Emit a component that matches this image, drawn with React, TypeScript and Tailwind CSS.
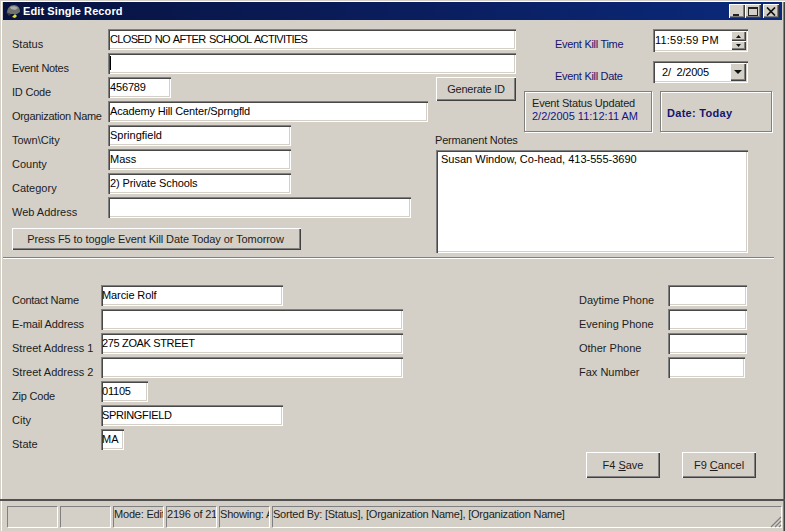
import React from "react";

const SUNK = "bg-white shadow-[inset_1px_1px_0_#808080,inset_2px_2px_0_#484848,inset_-1px_-1px_0_#ffffff,inset_-2px_-2px_0_#d4d0c8]";
const RAISED = "bg-[#d4d0c8] shadow-[inset_1px_1px_0_#ffffff,inset_-1px_-1px_0_#404040,inset_-2px_-2px_0_#808080]";
const ETCHED = "border border-[#808080] shadow-[inset_1px_1px_0_#ffffff,1px_1px_0_#ffffff]";

function Input({ text, className = "", children }: { text?: string; className?: string; children?: React.ReactNode }) {
  return (
    <div className={`${SUNK} h-[21px] pt-[4px] leading-[13px] whitespace-nowrap overflow-hidden ${className}`}>
      {text}
      {children}
    </div>
  );
}

function Label({ text, className = "" }: { text: string; className?: string }) {
  return <div className={`pt-[9px] leading-[13px] whitespace-nowrap text-[#1c1c1c] ${className}`}>{text}</div>;
}

function CaptionButton({ children, className = "" }: { children: React.ReactNode; className?: string }) {
  return <div className={`${RAISED} w-[16px] h-[14px] flex items-center justify-center ${className}`}>{children}</div>;
}

function Row({ label, text, w, lt = "", tt = "" }: { label: string; text?: string; w: string; lt?: string; tt?: string }) {
  return (
    <div className="flex h-[24px]">
      <Label text={label} className={`w-[89px] ${lt}`} />
      <Input text={text} className={`pl-[1px] ${w} ${tt}`} />
    </div>
  );
}

function PhoneRow({ label, w = "w-[79px]" }: { label: string; w?: string }) {
  return (
    <div className="flex h-[24px]">
      <Label text={label} className="w-[89px]" />
      <Input className={w} />
    </div>
  );
}

function Panel({ text, className }: { text?: string; className: string }) {
  return (
    <div className={`h-[21px] border-t border-l border-[#808080] shadow-[1px_1px_0_#ffffff] pt-[1px] leading-[13px] whitespace-nowrap overflow-hidden shrink-0 ${className}`}>
      {text}
    </div>
  );
}

export default function App() {
  return (
    <div className="w-[785px] h-[531px] bg-[#d4d0c8] flex flex-col overflow-hidden text-[11px] text-black font-['Liberation_Sans',Arial,sans-serif] shadow-[inset_1px_1px_0_#d4d0c8,inset_2px_2px_0_#ffffff,inset_-1px_0_0_#404040,inset_-2px_0_0_#808080]">
      {/* Title bar */}
      <div className="mt-[2px] mx-[3px] h-[18px] shrink-0 flex items-center bg-gradient-to-r from-[#07123f] via-[#0a1d5c] to-[#0a2a7c] pr-[3px]">
        <svg width="18" height="16" viewBox="0 0 18 16" className="ml-[1px] shrink-0">
          <path d="M3 10 C3 5 6 2 10 2 C14 2 16 5 16 9 L13 11 L6 11 Z" fill="#6f716e" />
          <path d="M6 4 C8 3 12 3 14 5 L11 7 L7 6 Z" fill="#a9aba7" />
          <path d="M2 9 L7 11 L5 13 Z" fill="#3d3f3c" />
          <path d="M8 14 L11 11 L13 13 L11 15 Z" fill="#e8e02a" />
        </svg>
        <span className="ml-[1px] font-bold text-[11px] text-white leading-none tracking-[0.1px]">Edit Single Record</span>
        <div className="ml-auto flex">
          <CaptionButton>
            <div className="w-[6px] h-[2px] bg-[#222] mt-[7px] -ml-[2px]" />
          </CaptionButton>
          <CaptionButton>
            <div className="w-[10px] h-[9px] border border-[#222] border-t-2" />
          </CaptionButton>
          <CaptionButton className="ml-[2px]">
            <svg width="10" height="9" viewBox="0 0 10 9">
              <path d="M1 0.5 L9 8.5 M9 0.5 L1 8.5" stroke="#111" strokeWidth="1.7" />
            </svg>
          </CaptionButton>
        </div>
      </div>

      {/* Body */}
      <div className="flex-1 flex flex-col pt-[9px]">
        {/* Top form */}
        <div className="ml-[12px] grid grid-cols-[96px_320px_7px_81px_8px_248px] auto-rows-[24px]">
          <Label text="Status" className="col-start-1 row-start-1" />
          <Input text="CLOSED NO AFTER SCHOOL ACTIVITIES" className="col-start-2 col-span-3 row-start-1 pl-[2px] tracking-[-0.65px] [word-spacing:1px]" />
          <Label text="Event Notes" className="col-start-1 row-start-2 tracking-[-0.3px]" />
          <Input className="col-start-2 col-span-3 row-start-2 pl-[2px]">
            <span className="block w-px h-[14px] bg-black -mt-[1px]" />
          </Input>
          <Label text="ID Code" className="col-start-1 row-start-3 tracking-[-0.2px]" />
          <Input text="456789" className="col-start-2 row-start-3 w-[63px] pl-[2px] tracking-[-0.15px]" />
          <div className={`${RAISED} col-start-4 row-start-3 h-[24px] ml-[1px] flex items-center justify-center text-[#1c1c1c] tracking-[-0.2px]`}>Generate ID</div>
          <Label text="Organization Name" className="col-start-1 row-start-4 tracking-[-0.3px]" />
          <Input text="Academy Hill Center/Sprngfld" className="col-start-2 row-start-4 pl-[2px] tracking-[-0.15px]" />
          <Label text="Town\City" className="col-start-1 row-start-5" />
          <Input text="Springfield" className="col-start-2 row-start-5 w-[183px] pl-[2px]" />
          <Label text="County" className="col-start-1 row-start-6" />
          <Input text="Mass" className="col-start-2 row-start-6 w-[183px] pl-[2px]" />
          <Label text="Category" className="col-start-1 row-start-7" />
          <Input text="2) Private Schools" className="col-start-2 row-start-7 w-[183px] pl-[2px] tracking-[-0.1px]" />
          <Label text="Web Address" className="col-start-1 row-start-8" />
          <Input className="col-start-2 row-start-8 w-[303px]" />
          <div className="col-start-1 col-span-2 row-start-9 pt-[7px]">
            <div className={`${RAISED} w-[289px] h-[22px] pr-[2px] flex items-center justify-center text-[#1c1c1c] tracking-[-0.08px]`}>
              Press F5 to toggle Event Kill Date Today or Tomorrow
            </div>
          </div>

          {/* Event kill block */}
          <div className="col-start-6 row-start-1 row-span-4 flex flex-col">
            <div className="flex h-[32px] shrink-0">
              <div className="w-[129px] pl-[31px] pt-[9px] leading-[13px] text-[#14146e] whitespace-nowrap tracking-[-0.3px]">Event Kill Time</div>
              <div className={`${SUNK} w-[95px] h-[23px] flex justify-between`}>
                <span className="pl-[2px] pt-[5px] leading-[13px] tracking-[0.2px]">11:59:59 PM</span>
                <div className="flex flex-col p-[2px] pl-0">
                  <div className={`${RAISED} w-[15px] h-[10px] flex items-center justify-center`}>
                    <svg width="5" height="3" viewBox="0 0 5 3"><path d="M2.5 0 L5 3 L0 3 Z" fill="#111" /></svg>
                  </div>
                  <div className={`${RAISED} w-[15px] h-[9px] flex items-center justify-center`}>
                    <svg width="5" height="3" viewBox="0 0 5 3"><path d="M0 0 L5 0 L2.5 3 Z" fill="#111" /></svg>
                  </div>
                </div>
              </div>
            </div>
            <div className="flex h-[30px] shrink-0">
              <div className="w-[129px] pl-[31px] pt-[9px] leading-[13px] text-[#14146e] whitespace-nowrap tracking-[-0.3px]">Event Kill Date</div>
              <div className={`${SUNK} w-[95px] h-[22px] flex justify-between`}>
                <span className="pl-[9px] pt-[5px] leading-[13px] whitespace-pre tracking-[-0.2px]">2/  2/2005</span>
                <div className={`${RAISED} w-[16px] h-[18px] m-[2px] flex items-center justify-center`}>
                  <svg width="8" height="4" viewBox="0 0 8 4"><path d="M0 0 L8 0 L4 4 Z" fill="#111" /></svg>
                </div>
              </div>
            </div>
            <div className="flex gap-[8px] shrink-0">
              <div className={`${ETCHED} w-[128px] h-[41px] flex flex-col items-start justify-center pl-[7px] pb-[4px] leading-[13px]`}>
                <span className="text-[#1c1c1c] tracking-[-0.2px]">Event Status Updated</span>
                <span className="text-[#14148a]">2/2/2005 11:12:11 AM</span>
              </div>
              <div className={`${ETCHED} w-[112px] h-[41px] flex items-center pl-[6px] pt-[3px] font-bold text-[#14146e] leading-[13px] tracking-[0.3px]`}>Date: Today</div>
            </div>
          </div>

          {/* Permanent notes */}
          <div className="col-start-4 col-span-3 row-start-5 row-span-5 pt-[9px]">
            <div className="leading-[13px] h-[16px] text-[#1c1c1c] tracking-[-0.2px]">Permanent Notes</div>
            <div className={`${SUNK} ml-[1px] w-[312px] h-[103px] pl-[5px] pt-[3px] leading-[13px]`}>Susan Window, Co-head, 413-555-3690</div>
          </div>
        </div>

        {/* Separator */}
        <div className="mt-[12px] ml-[3px] w-[771px] h-[2px] border-t border-[#808080] border-b-white border-b shrink-0" />

        {/* Bottom form */}
        <div className="mt-[26px] ml-[12px] flex">
          <div className="w-[567px]">
            <Row label="Contact Name" lt="tracking-[-0.3px]" text="Marcie Rolf" tt="tracking-[-0.1px]" w="w-[182px]" />
            <Row label="E-mail Address" lt="tracking-[-0.15px]" w="w-[302px]" />
            <Row label="Street Address 1" text="275 ZOAK STREET" tt="tracking-[-0.35px]" w="w-[302px]" />
            <Row label="Street Address 2" w="w-[302px]" />
            <Row label="Zip Code" lt="tracking-[-0.2px]" text="01105" tt="tracking-[-0.2px]" w="w-[47px]" />
            <Row label="City" text="SPRINGFIELD" tt="tracking-[-0.35px]" w="w-[182px]" />
            <Row label="State" text="MA" w="w-[23px]" />
          </div>
          <div className="flex flex-col h-[193px]">
            <PhoneRow label="Daytime Phone" />
            <PhoneRow label="Evening Phone" />
            <PhoneRow label="Other Phone" />
            <PhoneRow label="Fax Number" w="w-[77px]" />
            <div className="mt-auto ml-[7px] flex gap-[22px] text-[#1c1c1c]">
              <div className={`${RAISED} w-[74px] h-[26px] flex items-center justify-center`}>
                <span>F4 <u>S</u>ave</span>
              </div>
              <div className={`${RAISED} w-[74px] h-[26px] flex items-center justify-center`}>
                <span>F9 <u>C</u>ancel</span>
              </div>
            </div>
          </div>
        </div>
      </div>

      {/* Status bar */}
      <div className="h-[32px] shrink-0 border-t-2 border-[#505050] flex items-start gap-[3px] pl-[7px] pt-[5px] relative text-[#1c1c1c]">
        <Panel className="w-[50px]" />
        <Panel className="w-[50px]" />
        <Panel text="Mode: Edit" className="w-[50px] tracking-[-0.2px]" />
        <Panel text="2196 of 2196" className="w-[50px] tracking-[-0.2px]" />
        <Panel text="Showing: All" className="w-[50px] tracking-[-0.2px]" />
        <Panel text="Sorted By: [Status], [Organization Name], [Organization Name]" className="flex-1 mr-[4px] tracking-[-0.23px]" />
        <svg width="12" height="12" viewBox="0 0 12 12" className="absolute right-[3px] bottom-[3px]">
          <path d="M11 1 L1 11 M11 5 L5 11 M11 9 L9 11" stroke="#808080" strokeWidth="1.2" />
        </svg>
      </div>
    </div>
  );
}
